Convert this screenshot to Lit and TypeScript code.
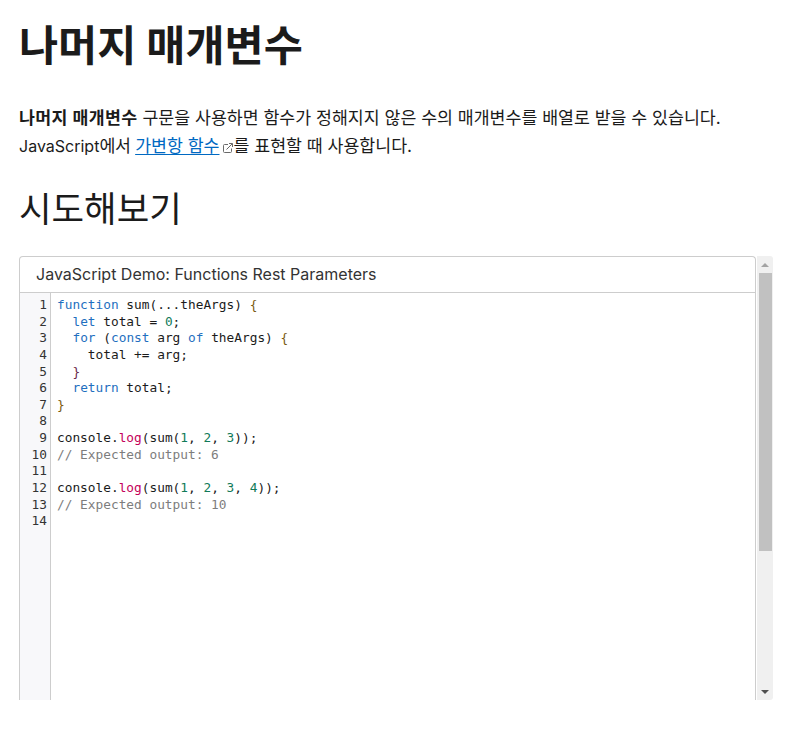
import { LitElement, html, css } from "lit";
import { customElement } from "lit/decorators.js";

type Tok = [string, string];
const K = "k", N = "n", F = "f", C = "c", P = "p", T = "t", V = "v";
const LINES: Tok[][] = [
  [[K, "function"], [T, " sum(...theArgs) "], [P, "{"]],
  [[T, "  "], [K, "let"], [T, " total = "], [N, "0"], [T, ";"]],
  [[T, "  "], [K, "for"], [T, " ("], [K, "const"], [T, " arg "], [K, "of"], [T, " theArgs) "], [P, "{"]],
  [[T, "    total += arg;"]],
  [[T, "  "], [V, "}"]],
  [[T, "  "], [K, "return"], [T, " total;"]],
  [[P, "}"]],
  [],
  [[T, "console."], [F, "log"], [T, "(sum("], [N, "1"], [T, ", "], [N, "2"], [T, ", "], [N, "3"], [T, "));"]],
  [[C, "// Expected output: 6"]],
  [],
  [[T, "console."], [F, "log"], [T, "(sum("], [N, "1"], [T, ", "], [N, "2"], [T, ", "], [N, "3"], [T, ", "], [N, "4"], [T, "));"]],
  [[C, "// Expected output: 10"]],
  [],
];

@customElement("app-root")
export class AppRoot extends LitElement {
  static styles = css`
    :host {
      display: block;
      height: 736px;
      overflow: hidden;
      background: #fff;
      color: #1b1b1b;
      font-family: Inter, "Noto Sans CJK KR", sans-serif;
    }
    .page {
      padding: 0 16px 0 19px;
    }
    h1 {
      margin: 0;
      padding-top: 21px;
      font-size: 42.5px;
      line-height: 50px;
      font-weight: 700;
    }
    p {
      margin: 0;
      font-size: 16px;
      line-height: 28px;
    }
    .intro {
      margin-top: 33px;
    }
    .ko {
      font-size: 17.3px;
    }
    .tight {
      letter-spacing: -0.3px;
    }
    strong {
      font-weight: 700;
      letter-spacing: 0.4px;
    }
    a {
      color: #0069c2;
      text-decoration: underline;
      text-underline-offset: 2px;
    }
    .ext {
      display: inline-block;
      width: 10px;
      height: 10px;
      margin: 0 1px 0 3px;
      vertical-align: -1px;
    }
    h2 {
      margin: 30px 0 0;
      font-size: 35.4px;
      line-height: 40px;
      font-weight: 400;
    }
    .demo {
      display: flex;
      margin-top: 26px;
      height: 444px;
    }
    .frame {
      flex: 1;
      min-width: 0;
      display: flex;
      flex-direction: column;
      border: 1px solid #cdcdcd;
      border-bottom: none;
      border-radius: 4px 4px 0 0;
    }
    .title {
      height: 36px;
      padding: 0 0 2px 16px;
      box-sizing: border-box;
      display: flex;
      align-items: center;
      font-size: 16px;
      color: #333;
      border-bottom: 1px solid #cdcdcd;
      flex: none;
    }
    .editor {
      flex: 1;
      display: flex;
      min-height: 0;
      font-family: "DejaVu Sans Mono", monospace;
      font-size: 12.8px;
      line-height: 16.65px;
    }
    .gutter {
      width: 27px;
      padding: 4px 3px 0 0;
      background: #f8f8fa;
      border-right: 1px solid #cdcdcd;
      text-align: right;
      color: #333;
      flex: none;
    }
    .code {
      padding: 4px 0 0 6px;
      white-space: pre;
      color: #1b1b1b;
    }
    .ln { height: 16.65px; }
    .k { color: #1f6fc0; }
    .n { color: #117a58; }
    .f { color: #c4005a; }
    .c { color: #7d7d7d; }
    .p { color: #7a5a10; }
    .v { color: #6b2a4a; }
    .bar {
      width: 16px;
      flex: none;
      margin-left: 1px;
      background: #f0f0f0;
      border-radius: 0 3px 3px 0;
      display: flex;
      flex-direction: column;
      align-items: center;
    }
    .btn {
      height: 17px;
      width: 100%;
      display: flex;
      align-items: center;
      justify-content: center;
      flex: none;
    }
    .thumb {
      width: 13px;
      height: 278px;
      background: #c1c1c1;
      flex: none;
    }
    .track { flex: 1; }
  `;

  render() {
    return html`
      <div class="page">
        <h1>나머지 매개변수</h1>
        <p class="intro"><strong class="ko">나머지 매개변수</strong><span class="ko"> 구문을 사용하면 함수가 정해지지 않은 수의 매개변수를 배열로 받을 수 있습니다.</span>
        JavaScript<span class="ko tight">에서 </span><a class="ko" href="#">가변항 함수</a><svg class="ext" viewBox="0 0 10 10" fill="none" stroke="#6a6a6a" stroke-width="1"><path d="M5 1.5H1.5a1 1 0 0 0-1 1v6a1 1 0 0 0 1 1h6a1 1 0 0 0 1-1V5.5"/><path d="M3.5 6.5 9.2.8M6 .5h3.5V4"/></svg><span class="ko">를 표현할 때 사용합니다.</span></p>
        <h2>시도해보기</h2>
        <div class="demo">
          <div class="frame">
            <div class="title">JavaScript Demo: Functions Rest Parameters</div>
            <div class="editor">
              <div class="gutter">${LINES.map((_, i) => html`<div class="ln">${i + 1}</div>`)}</div>
              <div class="code">${LINES.map(
                (l) => html`<div class="ln">${l.map(([c, t]) => (c === T ? t : html`<span class=${c}>${t}</span>`))}</div>`
              )}</div>
            </div>
          </div>
          <div class="bar">
            <div class="btn"><svg width="8" height="4" viewBox="0 0 8 4"><path d="M4 0 8 4H0Z" fill="#a3a3a3"/></svg></div>
            <div class="thumb"></div>
            <div class="track"></div>
            <div class="btn"><svg width="8" height="4" viewBox="0 0 8 4"><path d="M0 0H8L4 4Z" fill="#505050"/></svg></div>
          </div>
        </div>
      </div>
    `;
  }
}
